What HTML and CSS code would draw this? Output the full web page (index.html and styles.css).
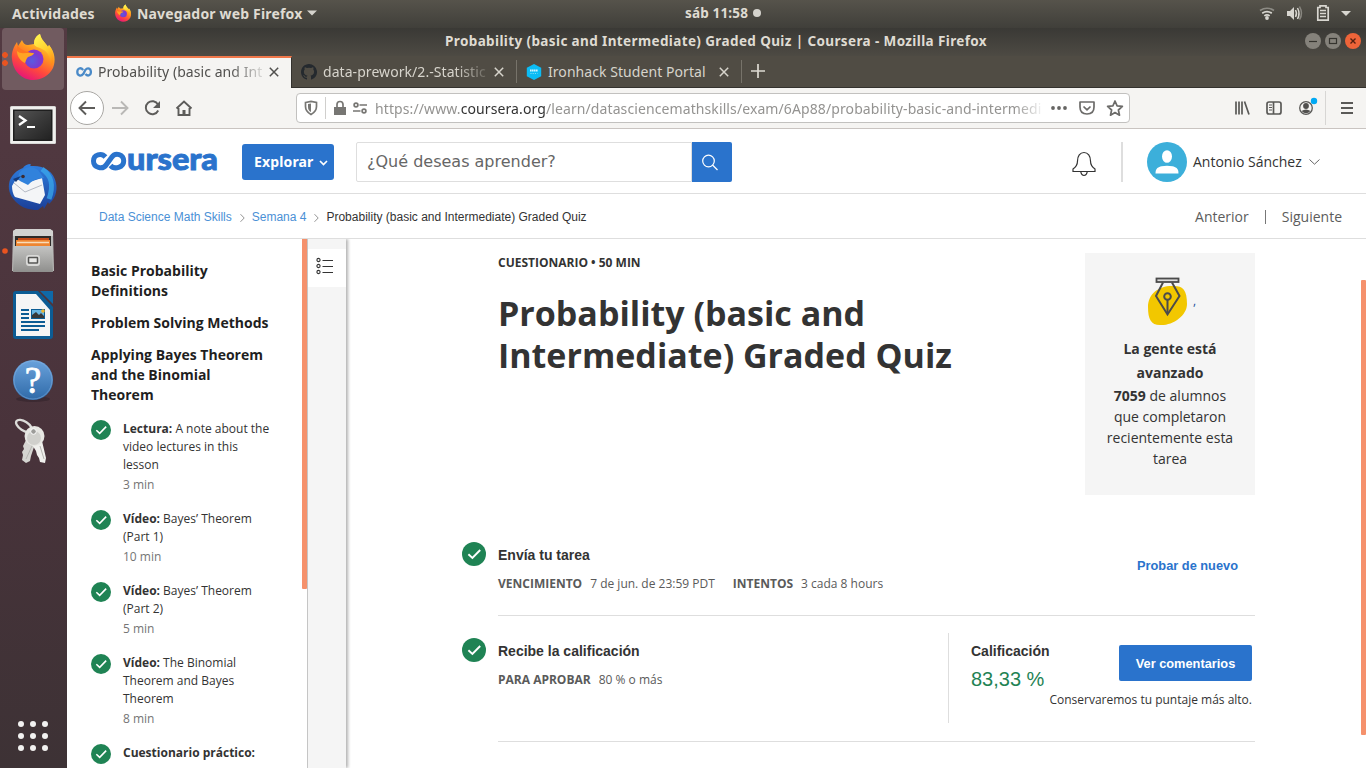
FILE: index.html
```
<!DOCTYPE html>
<html lang="es">
<head>
<meta charset="utf-8">
<title>Probability (basic and Intermediate) Graded Quiz | Coursera</title>
<link rel="stylesheet" href="styles.css">
</head>
<body>
<svg width="0" height="0" class="defs">
  <defs>
    <linearGradient id="fxBody" x1="0.8" y1="0" x2="0.3" y2="1"><stop offset="0" stop-color="#fff44f"/><stop offset=".4" stop-color="#ff9a1f"/><stop offset=".7" stop-color="#ff4a3c"/><stop offset="1" stop-color="#e5127c"/></linearGradient>
    <linearGradient id="fxFlame" x1="0.3" y1="0" x2="0.7" y2="1"><stop offset="0" stop-color="#fff44f"/><stop offset=".5" stop-color="#ffd02e"/><stop offset="1" stop-color="#ff8a16"/></linearGradient>
    <radialGradient id="fxGlobe" cx=".4" cy=".6" r=".7"><stop offset="0" stop-color="#5a5be0"/><stop offset=".6" stop-color="#7a3bd0"/><stop offset="1" stop-color="#9c2fc9"/></radialGradient>
    <linearGradient id="screen" x1="0" y1="0" x2="1" y2="1"><stop offset="0" stop-color="#555"/><stop offset=".5" stop-color="#3a3a3a"/><stop offset="1" stop-color="#222"/></linearGradient>
    <linearGradient id="bird" x1="0" y1="0" x2="0" y2="1"><stop offset="0" stop-color="#2f7fe0"/><stop offset="1" stop-color="#1b3f98"/></linearGradient>
    <linearGradient id="metal" x1="0" y1="0" x2="0" y2="1"><stop offset="0" stop-color="#c4c4c2"/><stop offset="1" stop-color="#8f8f8d"/></linearGradient>
    <linearGradient id="helpBg" x1="0" y1="0" x2="0" y2="1"><stop offset="0" stop-color="#6aa2dc"/><stop offset="1" stop-color="#2f6aa8"/></linearGradient>
    <symbol id="firefox" viewBox="0 0 46 48">
      <path d="M2 26C1 20 4 13 7 9l1 4 4-6c1 3 3 5 6 5l6-1C24 6 26 3 30 1c1 6 6 9 8 13l1-2c6 7 7 16 4 23-4 8-12 12-20 12C12 47 3 38 2 26z" fill="url(#fxBody)"/>
      <path d="M24 11C24 6 26 3 30 1c1 6 6 9 8 13l1-2c6 8 5 17 2 22 0-8-2-15-9-18-4-2-7-2-8-5z" fill="url(#fxFlame)"/>
      <circle cx="24" cy="26" r="9.5" fill="url(#fxGlobe)"/>
      <path d="M7 18c5-1 9 0 12 2h5c-1 3-4 3-6 4-2 2-2 4-3 6-4-2-8-6-8-12z" fill="#ffa423"/>
      <path d="M7 12c2 3 5 5 8 6l8 2c-7-1-12 2-16-2z" fill="#ff751f"/>
    </symbol>
    <symbol id="done" viewBox="0 0 24 24"><circle cx="12" cy="12" r="12" fill="#1f8354"/><path d="M6.400 12.300l4 3.700 7.800-8" fill="none" stroke="#fff" stroke-width="1.900"/></symbol>
    <symbol id="close" viewBox="0 0 10 10"><path d="M.8.8l8.400 8.400M9.200.8L.8 9.200" fill="none" stroke="currentColor" stroke-width="1.500"/></symbol>
  </defs>
</svg>
<div class="desktop">
  <div class="panel">
    <span class="panel-activities">Actividades</span>
    <svg class="panel-fx" width="18" height="18"><use href="#firefox"/></svg>
    <span class="panel-app">Navegador web Firefox</span>
    <svg width="12" height="6" viewBox="0 0 12 6"><path d="M1 .5h10L6 5.500z" fill="#d5d3cd"/></svg>
    <span class="panel-clock">sáb 11:58</span>
    <span class="panel-dot"></span>
    <svg class="panel-tray" width="106" height="28" viewBox="1255 0 106 28">
      <g fill="none" stroke="#d8d6d0" stroke-width="1.700"><path d="M1260 10.500q7-4.500 14 0" opacity=".45"/><path d="M1262.200 13.200q4.800-3.200 9.600 0M1264.300 15.900q2.700-1.900 5.400 0"/></g><circle cx="1267" cy="18" r="1.900" fill="#d8d6d0"/>
      <path d="M1287 11h3l4-4v13l-4-4h-3z" fill="#d8d6d0"/><path d="M1295.500 10q2 3.500 0 7M1297.500 8q3 5.500 0 11" fill="none" stroke="#d8d6d0" stroke-width="1.500"/><path d="M1299.500 6.500q4 7 0 13" fill="none" stroke="#88867f" stroke-width="1.500"/>
      <path d="M1317.800 20.200V7.500h2.200v-1.700h6v1.700h2.200v12.700z" fill="none" stroke="#d8d6d0" stroke-width="1.700"/><path d="M1320 10.500h6M1320 13.500h6M1320 16.500h6" stroke="#d8d6d0" stroke-width="1.500"/>
      <path d="M1341 11h10l-5 5z" fill="#d8d6d0"/>
    </svg>
  </div>
  <div class="below">
    <nav class="dock">
      <div class="dock-item active"><svg width="46" height="48"><use href="#firefox"/></svg></div>
      <svg width="67" height="64" viewBox="0 92 67 64"><rect x="10" y="106" width="46" height="38" rx="1.500" fill="#d9d9d7"/><rect x="11" y="107" width="44" height="36" fill="#f0f0ee"/><rect x="13" y="109.500" width="39.500" height="31.500" fill="#1e1e1e"/><rect x="14.500" y="111" width="36.500" height="28.500" fill="url(#screen)"/><path d="M19 116l6.500 4.500L19 125" fill="none" stroke="#fff" stroke-width="2.300"/><path d="M27 127h8" stroke="#fff" stroke-width="2"/></svg>
      <svg width="67" height="64" viewBox="0 156 67 64"><path d="M9 184c1-8 8-14 14-16 1-2 4-4 8-4-1 1-1 2 0 2 12-1 23 5 25 17 2 9-2 17-7 21l-1-2-4 7-1-3-5 4c-9 0-16-2-22-8-5-5-8-11-7-18z" fill="url(#bird)"/><path d="M12 186l4-7 10 4 16-5 3 17-5 9-25-7q-3-4-3-11z" fill="#f4f5f7"/><path d="M14 183l11 9 17-7" fill="none" stroke="#b5bac4"/><path d="M22 170q8-6 16 0l6 8q-10 0-16 7l-8-4q-4-6 2-11z" fill="#3182dc"/><path d="M42 169c10 7 12 16 7 30" fill="none" stroke="#3ba8eb" stroke-width="5" opacity=".75"/><circle cx="23" cy="176.500" r="1.800" fill="#3c2b30"/><path d="M13 179l8-3-5 6z" fill="#143a78"/></svg>
      <svg width="67" height="64" viewBox="0 220 67 64"><path d="M13 231l3-2h34l3 2 1 40H12z" fill="#b9b9b7"/><path d="M13 231l3-2h34l3 2v5H13z" fill="#d2d2d0"/><rect x="15" y="236" width="36" height="11" fill="#2d2a28"/><rect x="18" y="238" width="31" height="8" fill="#c44a17"/><rect x="16" y="240" width="34" height="7" fill="#ee8530"/><path d="M17 242.500h32" stroke="#f8dcb8" stroke-width="1.500"/><path d="M14 246h38l1 26H13z" fill="url(#metal)"/><rect x="27" y="256" width="12" height="9" rx="2" fill="#e6e6e4" stroke="#dadad8" stroke-width="2"/><rect x="28.500" y="257.500" width="9" height="5.500" rx=".5" fill="#e8e8e6" stroke="#565654" stroke-width="1.500"/><circle cx="5" cy="251" r="2.800" fill="#e95420"/></svg>
      <svg width="67" height="64" viewBox="0 284 67 64"><path d="M16 291h22l15 16v29q0 3-3 3H16q-3 0-3-3v-42q0-3 3-3z" fill="#0c5c94"/><path d="M16 294h20l14 16v26H16z" fill="#f5f5f5"/><path d="M40 291h13v13z" fill="#0f69a8"/><path d="M21 310h8M21 314h8M21 318h8M21 322h24M21 326h24M21 330h18" stroke="#0c5c94" stroke-width="1.900"/><rect x="31" y="309" width="14" height="10" fill="#0c5c94"/><rect x="32" y="310" width="12" height="8" fill="#68b5e2"/><path d="M32 318v-3l4-3 3 3 2-2 3 3v2z" fill="#383838"/><circle cx="43" cy="311" r="1.800" fill="#efb62f"/></svg>
      <svg width="67" height="64" viewBox="0 348 67 64"><ellipse cx="33" cy="399" rx="17" ry="3" fill="#2d2027" opacity=".5"/><circle cx="33" cy="380" r="20" fill="url(#helpBg)"/><circle cx="33" cy="380" r="19" fill="none" stroke="#8ab6e3" opacity=".5"/><text x="33" y="393" text-anchor="middle" class="dock-help">?</text></svg>
      <svg width="67" height="64" viewBox="0 412 67 64"><ellipse cx="24" cy="426" rx="9" ry="4.500" transform="rotate(33 24 426)" fill="none" stroke="#dcdcd9" stroke-width="2.300"/><path d="M26 440l-3 6 1 3-2 3 1 3-1 5 4 3 4-2 1-5 5-15z" fill="#d5d5d1"/><path d="M31 443l5 8 1 4 2 3 1 4 5 1 1-5-4-17z" fill="#f0f0ed"/><circle cx="34.500" cy="436" r="10" fill="#e7e7e3"/><circle cx="34" cy="438" r="7" fill="#d0d0cc"/><circle cx="33.500" cy="431.500" r="2.800" fill="#9c9c99" stroke="#fff"/><path d="M26 459l6-13M40 446l4 13" stroke="#b5b5b1"/></svg>
      <svg class="dock-apps" width="67" height="64" viewBox="0 704 67 64"><g fill="#f2f1f0"><circle cx="21" cy="724" r="3"/><circle cx="33" cy="724" r="3"/><circle cx="45" cy="724" r="3"/><circle cx="21" cy="736" r="3"/><circle cx="33" cy="736" r="3"/><circle cx="45" cy="736" r="3"/><circle cx="21" cy="748" r="3"/><circle cx="33" cy="748" r="3"/><circle cx="45" cy="748" r="3"/></g></svg>
    </nav>
    <div class="window">
      <div class="titlebar">
        <span class="title-text">Probability (basic and Intermediate) Graded Quiz | Coursera - Mozilla Firefox</span>
        <svg class="win-buttons" width="60" height="20" viewBox="1303 31 60 20"><circle cx="1313" cy="41" r="8" fill="#85827b"/><circle cx="1333" cy="41" r="8" fill="#85827b"/><circle cx="1353" cy="41" r="8" fill="#ee6439"/><g fill="none" stroke="#35342f" stroke-width="1.200"><path d="M1309 41.500h8"/><rect x="1329.500" y="38.500" width="7" height="5"/><path d="M1350.500 38.500l5 5M1355.500 38.500l-5 5" stroke="#542010" stroke-width="1.400"/></g></svg>
      </div>
      <div class="tabs">
        <div class="tab tab-active">
          <svg width="16" height="10" viewBox="0 0 16 10"><path d="M7.200 3C4.500-.2 1.300 1.500 1.300 5s3.500 5 6.100 1.800L9.300 3c2.600-3 5.600-1.300 5.600 2s-3 4.800-5.500 2" fill="none" stroke="#4a8ac8" stroke-width="2.300"/></svg>
          <span class="tab-label fade">Probability (basic and Int</span>
          <svg width="10" height="10"><use href="#close"/></svg>
        </div>
        <div class="tab tab-git">
          <svg width="16" height="16" viewBox="0 0 16 16"><path fill="#24292e" d="M8 0C3.600 0 0 3.600 0 8c0 3.500 2.300 6.500 5.500 7.600.4.100.5-.2.500-.4v-1.500c-2.200.5-2.700-.9-2.700-.9-.4-.9-.9-1.200-.9-1.200-.7-.5.100-.5.100-.5.800.1 1.200.8 1.200.8.700 1.300 1.900.9 2.300.7.100-.5.300-.9.500-1.100-1.800-.2-3.600-.9-3.600-4 0-.9.300-1.600.8-2.100-.1-.2-.4-1 .1-2.100 0 0 .7-.2 2.200.8a8 8 0 0 1 4 0c1.500-1 2.200-.8 2.200-.8.500 1.100.2 1.900.1 2.100.5.600.8 1.300.8 2.100 0 3.100-1.900 3.800-3.600 4 .3.200.5.700.5 1.500v2.200c0 .2.100.5.500.4A8 8 0 0 0 8 0z"/></svg>
          <span class="tab-label fade">data-prework/2.-Statistic</span>
          <svg width="10" height="10"><use href="#close"/></svg>
        </div>
        <div class="tab tab-iron">
          <svg width="16" height="16" viewBox="0 0 16 16"><path d="M8 0l7.200 3.800v8.400L8 16 .8 12.200V3.800z" fill="#0cbcf5"/><path d="M4 6.500h8" stroke="#d2f4ff" stroke-width="1.800" stroke-dasharray="1.600 .4"/><path d="M4.500 9.500h7" stroke="#8be1fb" stroke-dasharray="1 1.200"/></svg>
          <span class="tab-label">Ironhack Student Portal</span>
          <svg width="10" height="10"><use href="#close"/></svg>
        </div>
        <svg class="tab-new" width="14" height="14" viewBox="0 0 14 14"><path d="M7 0v14M0 7h14" stroke="#dddad2" stroke-width="1.700"/></svg>
      </div>
      <div class="toolbar">
        <svg width="230" height="40" viewBox="67 88 230 40">
          <circle cx="87" cy="108" r="16.500" fill="#fff" stroke="#a9a7a4"/>
          <g fill="none" stroke="#5d5c5a" stroke-width="1.900"><path d="M95 108H80M86 101.500l-6.500 6.500 6.500 6.500"/><path d="M112 108h15M121 101.500l6.500 6.500-6.500 6.500" stroke="#b9b8b6"/><path d="M158 104.500a6.500 6.500 0 1 0 .2 6"/><path d="M176.500 108.500l7.500-7 7.500 7M178.500 108v7h11v-7"/></g><path d="M160 101v7h-7zM182.500 110h3v5h-3z" fill="#5d5c5a"/>
        </svg>
        <div class="urlbar">
          <svg width="78" height="28" viewBox="297 94 78 28"><g fill="none" stroke="#777673" stroke-width="1.700"><path d="M305.500 102.500l5.500-1.200 5.500 1.200v4q0 5-5.500 8-5.500-3-5.500-8z"/><path d="M325.500 97v22" stroke="#d0cfcd" stroke-width="1"/><path d="M337 107v-2.500a3 3 0 0 1 6 0v2.500"/><circle cx="356" cy="105" r="1.900"/><circle cx="364" cy="111" r="1.900"/><path d="M359.500 105h7.500M353 111h7.500"/></g><path d="M311 103.500v8.500q-3-1.500-3-5v-3zM334 107h12v8h-12z" fill="#777673"/></svg>
          <span class="url">https://www.<b>coursera.org</b>/learn/datasciencemathskills/exam/6Ap88/probability-basic-and-intermedi</span>
          <svg width="87" height="28" viewBox="1042 94 87 28"><g fill="#666563"><circle cx="1053" cy="108" r="1.900"/><circle cx="1059" cy="108" r="1.900"/><circle cx="1065" cy="108" r="1.900"/></g><g fill="none" stroke="#6c6b69" stroke-width="1.700" stroke-linejoin="round"><path d="M1080 102h14v5q0 7-7 7t-7-7zM1083.500 106.500l3.500 3.300 3.500-3.300"/><path d="M1115 101l2.100 4.800 5.300.6-4 3.600 1.100 5.200-4.500-2.700-4.500 2.700 1.100-5.200-4-3.600 5.300-.6z"/></g></svg>
        </div>
        <svg class="tool-right" width="136" height="40" viewBox="1230 88 136 40"><g fill="none" stroke="#5a5957" stroke-width="1.700"><path d="M1236 101.500v13M1239 101.500v13M1242 101.500v13M1244.500 101.500l4.500 13"/><rect x="1267" y="102" width="14" height="12" rx="2"/><path d="M1273.500 102v12" /><path d="M1269 105h3M1269 107.500h3M1269 110h3" stroke-width="1"/><circle cx="1306" cy="108" r="6.300" stroke-width="1.300"/><path d="M1341 103h12M1341 108h12M1341 113h12" stroke-width="2"/></g><circle cx="1306" cy="106" r="2.900" fill="#51504e"/><path d="M1301.500 111q4.500-3 9 0-4.500 4.500-9 0z" fill="#51504e"/><circle cx="1314" cy="101" r="3.200" fill="#00a9f4"/><path d="M1325.500 91v34" stroke="#d7d6d4"/></svg>
      </div>
      <div class="page">
        <header class="site-header">
          <svg class="logo" width="130" height="40" viewBox="90 141 130 40"><path d="M105.500 157C101.500 152.500 93.500 154.500 93.500 161S102.500 170.500 106.500 164.500L111.500 157.500C115.500 151.500 123.700 154.500 123.700 161S114.500 170 110.500 165.500" fill="none" stroke="#2a73cc" stroke-width="5"/><text x="127" y="169.600" textLength="91" lengthAdjust="spacingAndGlyphs" class="logo-text">ursera</text></svg>
          <button class="explore">Explorar<svg width="9" height="6" viewBox="0 0 9 6"><path d="M1 1l3.500 3.500L8 1" fill="none" stroke="#fff" stroke-width="1.700"/></svg></button>
          <div class="search">¿Qué deseas aprender?</div>
          <div class="search-btn"><svg width="18" height="18" viewBox="0 0 18 18"><circle cx="7.500" cy="7" r="5.800" fill="none" stroke="#fff" stroke-width="1.200"/><path d="M11.500 11l5 5" stroke="#fff" stroke-width="1.300"/></svg></div>
          <svg class="bell" width="24" height="26" viewBox="0 0 24 26"><path d="M1 20.500h22v-2.500c-3-2-4.500-4-4.500-8 0-5-2.500-8.500-6.500-8.500S5.500 5 5.500 10c0 4-1.500 6-4.500 8zM8.800 21q.7 3.500 3.200 3.500t3.200-3.500" fill="none" stroke="#333" stroke-width="1.200"/></svg>
          <div class="header-rule"></div>
          <svg class="avatar" width="40" height="40" viewBox="0 0 40 40"><circle cx="20" cy="20" r="20" fill="#3cafda"/><ellipse cx="20" cy="14.500" rx="5" ry="6.300" fill="#fff"/><path d="M8.500 31.500c0-5.500 3-6.500 6-7.200q5.500-1 11 0c3 .7 6 1.700 6 7.200z" fill="#fff"/></svg>
          <span class="user">Antonio Sánchez</span>
          <svg width="11" height="6" viewBox="0 0 11 6"><path d="M.5.500l5 4.700 5-4.700" fill="none" stroke="#666" stroke-width="1"/></svg>
        </header>
        <div class="crumbs">
          <a>Data Science Math Skills</a><svg class="sep" width="5" height="8" viewBox="0 0 5 8"><path d="M.5.200L4.200 4 .5 7.800" fill="none" stroke="#888" stroke-width=".9"/></svg>
          <a>Semana 4</a><svg class="sep" width="5" height="8" viewBox="0 0 5 8"><path d="M.5.200L4.200 4 .5 7.800" fill="none" stroke="#888" stroke-width=".9"/></svg>
          <span>Probability (basic and Intermediate) Graded Quiz</span>
          <span class="prev">Anterior</span><i></i><span class="next">Siguiente</span>
        </div>
        <div class="content">
          <aside class="lessons">
            <div class="lessons-list">
              <h3>Basic Probability<br>Definitions</h3>
              <h3>Problem Solving Methods</h3>
              <h3>Applying Bayes Theorem<br>and the Binomial<br>Theorem</h3>
              <div class="lesson"><svg width="20" height="20"><use href="#done"/></svg><div><p><b>Lectura:</b> A note about the<br>video lectures in this<br>lesson</p><small>3 min</small></div></div>
              <div class="lesson"><svg width="20" height="20"><use href="#done"/></svg><div><p><b>Vídeo:</b> Bayes’ Theorem<br>(Part 1)</p><small>10 min</small></div></div>
              <div class="lesson"><svg width="20" height="20"><use href="#done"/></svg><div><p><b>Vídeo:</b> Bayes’ Theorem<br>(Part 2)</p><small>5 min</small></div></div>
              <div class="lesson"><svg width="20" height="20"><use href="#done"/></svg><div><p><b>Vídeo:</b> The Binomial<br>Theorem and Bayes<br>Theorem</p><small>8 min</small></div></div>
              <div class="lesson"><svg width="20" height="20"><use href="#done"/></svg><div><p><b>Cuestionario práctico:</b></p></div></div>
            </div>
            <div class="lessons-scroll"></div>
          </aside>
          <div class="strip"><div class="strip-btn"><svg width="18" height="18" viewBox="0 0 18 18"><g fill="none" stroke="#333" stroke-width="1.100"><circle cx="2.500" cy="3" r="1.600"/><circle cx="2.500" cy="9" r="1.600"/><circle cx="2.500" cy="15" r="1.600"/><path d="M6.500 3.500H17M6.500 9.500H17M6.500 15.500H17"/></g></svg></div></div>
          <main class="main">
            <section class="hero">
              <div>
                <div class="kicker">CUESTIONARIO • 50 MIN</div>
                <h1>Probability (basic and<br>Intermediate) Graded Quiz</h1>
              </div>
              <div class="card">
                <div class="card-icon"><svg width="41" height="50" viewBox="0 0 41 50"><path d="M1 31C1 17 13 9 27 10c9 0 13 4 13 18 0 12-15 22-27 21C4 49 1 43 1 31z" fill="#f2c700"/><g fill="none" stroke="#4b4b4b" stroke-width="2"><rect x="9.500" y="2.500" width="22" height="3.500" fill="#ddd" stroke-width="1.800"/><path d="M16 6.500L9 20l11.500 18.500L32.500 20 25 6.500"/><circle cx="20.500" cy="20.500" r="3.300"/><path d="M20.500 24v13"/></g></svg><span>,</span></div>
                <b class="card-title">La gente está<br>avanzado</b>
                <p><b>7059</b> de alumnos<br>que completaron<br>recientemente esta<br>tarea</p>
              </div>
            </section>
            <section class="step step-submit">
              <svg class="step-mark" width="24" height="24"><use href="#done"/></svg>
              <div class="step-info"><h2>Envía tu tarea</h2><div class="meta"><b>VENCIMIENTO</b><span>7 de jun. de 23:59 PDT</span><b>INTENTOS</b><span>3 cada 8 hours</span></div></div>
              <a class="retry">Probar de nuevo</a>
            </section>
            <section class="step step-grade">
              <svg class="step-mark" width="24" height="24"><use href="#done"/></svg>
              <div class="step-info"><h2>Recibe la calificación</h2><div class="meta"><b class="pass">PARA APROBAR</b><span>80 % o más</span></div></div>
              <div class="grade">
                <div class="grade-score"><h2>Calificación</h2><div class="score">83,33 %</div></div>
                <div class="grade-action"><button>Ver comentarios</button><p>Conservaremos tu puntaje más alto.</p></div>
              </div>
            </section>
          </main>
          <div class="page-scroll"></div>
        </div>
      </div>
    </div>
  </div>
</div>
</body>
</html>
```
FILE: styles.css
```
* { box-sizing: border-box; }
body { margin: 0; width: 1366px; height: 768px; overflow: hidden; font-family: "Noto Sans", sans-serif; color: #333; }
h1, h2, h3, p { margin: 0; }
svg { display: block; flex: none; }
button { border: 0; padding: 0; color: #fff; background: #2a73cc; }
.defs { position: absolute; }
.desktop { width: 1366px; height: 768px; display: flex; flex-direction: column; }

/* System panel */
.panel { height: 28px; flex: none; display: flex; align-items: center; background: linear-gradient(#56534b, #403f3a); color: #dfdbd2; font-weight: 700; font-size: 14px; letter-spacing: .17px; white-space: nowrap; padding: 0 0 2px 12px; }
.panel span { flex: none; }
.panel-activities { width: 102px; }
.panel-fx { margin-right: 5px; }
.panel-app { width: 169px; }
.panel-clock { width: 68px; margin-left: 367px; font-size: 13.500px; }
.panel-dot { width: 8px; height: 8px; border-radius: 4px; background: #d5d3cd; }
.panel-tray { margin: 2px 5px 0 auto; }
.below { display: flex; flex: 1; min-height: 0; }

/* Dock */
.dock { width: 67px; flex: none; display: flex; flex-direction: column; background: linear-gradient(#533a42, #49333b 55%, #3d3235); }
.dock-item { height: 62px; width: 62px; margin: 0 0 2px 2px; border-radius: 4px; flex: none; display: flex; align-items: center; padding-left: 8px; background: radial-gradient(circle at 3px 27px, #e95420 2.500px, transparent 3.200px), radial-gradient(circle at 3px 35px, #e95420 2.500px, transparent 3.200px), #715b60; }
.dock-item svg { margin-top: -4px; }
.dock-apps { margin-top: auto; }
.dock-help { font: 37px "Liberation Serif", serif; fill: #fff; stroke: #fff; stroke-width: .8px; }

/* Browser window */
.window { flex: 1; min-width: 0; display: flex; flex-direction: column; }
.titlebar { height: 28px; flex: none; display: flex; align-items: center; background: linear-gradient(#3a3935, #4d4a43); color: #dfdbd2; font-weight: 700; font-size: 13.500px; letter-spacing: .38px; padding: 0 3px 2px 378px; white-space: nowrap; }
.win-buttons { margin-left: auto; }
.tabs { height: 32px; flex: none; display: flex; background: #504c44; border-bottom: 1px solid #34322e; color: #d7d4cc; }
.tab { display: flex; align-items: center; flex: none; font-size: 14px; }
.tab-active { width: 225px; height: 32px; padding: 0 0 2px 9px; background: #f5f4f2; color: #51504e; border-top: 2px solid #f0774a; border-right: 1px solid #34322e; }
.tab-active .tab-label { margin-top: -2px; }
.tab-git { width: 224px; padding-left: 9px; }
.tab-iron { width: 226px; border-left: 1px solid #77736a; border-right: 1px solid #77736a; margin: 4px 0; padding-left: 9px; }
.tab-label { white-space: nowrap; margin: 0 6px; width: 165px; flex: none; letter-spacing: .06px; }
.fade { -webkit-mask-image: linear-gradient(90deg, #000 80%, rgba(0,0,0,.15) 100%); mask-image: linear-gradient(90deg, #000 80%, rgba(0,0,0,.15) 100%); }
.tab-new { margin: 8px 0 0 9px; }
.toolbar { height: 41px; flex: none; display: flex; background: #f5f4f2; border-bottom: 1px solid #c9c4c1; }
.urlbar { width: 834px; height: 30px; margin: 5px 0 0 -1px; border: 1px solid #c2c1bf; border-radius: 4px; background: #fff; display: flex; align-items: center; flex: none; }
.url { width: 667px; flex: none; white-space: nowrap; font-size: 14px; letter-spacing: .1px; color: #949391; -webkit-mask-image: linear-gradient(90deg, #000 96%, rgba(0,0,0,.1) 100%); mask-image: linear-gradient(90deg, #000 96%, rgba(0,0,0,.1) 100%); }
.url b { font-weight: 400; color: #333; }
.tool-right { margin-left: auto; }

/* Site header */
.page { flex: 1; min-height: 0; display: flex; flex-direction: column; background: #fff; font-family: "Open Sans", sans-serif; }
.site-header { height: 65px; flex: none; border-bottom: 1px solid #dedede; display: flex; align-items: center; padding: 2px 46px 0 23px; }
.site-header > * { flex: none; }
.logo { margin: 0 22px 2px 0; }
.logo-text { font: 900 31px Lato, sans-serif; fill: #2a73cc; stroke: #2a73cc; stroke-width: .9px; }
.explore { width: 92px; height: 36px; border-radius: 3px; font: 700 14px "Noto Sans", sans-serif; letter-spacing: .15px; display: flex; align-items: center; padding: 0 0 1px 12px; gap: 5px; }
.explore svg { margin-top: 2px; }
.search { width: 336px; height: 40px; margin-left: 22px; border: 1px solid #dedede; border-radius: 2px 0 0 2px; padding-left: 10px; font: 16px/37px "DejaVu Sans", sans-serif; color: #666; }
.search-btn { width: 40px; height: 40px; background: #2a73cc; border-radius: 0 2px 2px 0; padding: 12px 0 0 9px; }
.bell { margin-left: auto; margin-top: 3px; }
.header-rule { width: 2px; height: 40px; background: #dedede; margin: 0 24px 0 25px; }
.user { width: 116px; margin: -1px 0 0 6px; font-size: 14px; white-space: nowrap; }
.crumbs { height: 45px; flex: none; border-bottom: 1px solid #dedede; display: flex; align-items: center; padding: 1px 24px 0 32px; font: 12px "Liberation Sans", sans-serif; white-space: nowrap; }
.crumbs a { color: #4a90d6; }
.crumbs .sep { margin: 2px 7px 0 8px; }
.crumbs .prev { margin-left: auto; }
.crumbs .prev, .crumbs .next { font: 14px "Open Sans", sans-serif; color: #5c5c5c; }
.crumbs i { width: 1px; height: 14px; background: #777; margin: 0 16px; }
.content { flex: 1; min-height: 0; display: flex; overflow: hidden; }

/* Lesson list */
.lessons { width: 241px; flex: none; display: flex; border-right: 1px solid #c9c9c9; }
.lessons-list { width: 235px; flex: none; padding: 22px 0 0 24px; }
.lessons h3 { font-size: 14px; line-height: 20px; margin-bottom: 12px; color: #1f1f1f; white-space: nowrap; }
.lessons h3 + .lesson { margin-top: 15px; }
.lesson { display: flex; gap: 12px; margin-bottom: 16px; font-size: 12px; line-height: 18px; white-space: nowrap; }
.lesson p { margin-bottom: 2px; }
.lesson small { display: block; font-size: 12px; line-height: 18px; color: #757575; }
.lessons-scroll { width: 5px; height: 350px; background: #f5916c; border-radius: 0 0 1px 1px; }
.strip { width: 38px; flex: none; background: #f5f5f5; padding-top: 10px; box-shadow: 2px 0 3px rgba(0,0,0,.3); }
.strip-btn { height: 38px; background: #fff; padding: 8px 0 0 8px; }

/* Main column */
.main { width: 909px; flex: none; padding: 14px 0 0 117px; }
.hero { display: flex; justify-content: space-between; width: 792px; padding-left: 35px; height: 242px; }
.kicker { font-size: 12px; font-weight: 700; line-height: 18px; padding-top: 1px; }
.hero h1 { font-size: 34px; line-height: 42px; margin-top: 20px; white-space: nowrap; }
.card { width: 170px; height: 242px; background: #f5f5f5; text-align: center; font-size: 14px; line-height: 21px; }
.card-icon { height: 84px; padding: 23px 0 0 62px; display: flex; font-size: 12px; }
.card-icon span { margin: 14px 0 0 5px; color: #1f4f9a; }
.card-title { line-height: 24px; display: block; }
.step { width: 757px; margin-left: 35px; border-bottom: 1px solid #dedede; display: flex; }
.step-mark { margin: 0 12px 0 -36px; }
.step-submit { height: 91px; margin-top: 30px; padding-top: 17px; }
.step-grade { height: 126px; padding-top: 22px; }
.step-info { width: 450px; padding-top: 3px; }
.step h2 { font: 700 14px/20px "Liberation Sans", sans-serif; white-space: nowrap; }
.meta { display: flex; font-size: 12px; line-height: 18px; margin-top: 10px; color: #5a5a5a; white-space: nowrap; }
.meta span { margin: 0 18px 0 8px; }
.retry { margin: 16px 17px 0 auto; font: 700 12.800px/15px "Liberation Sans", sans-serif; color: #2a73cc; white-space: nowrap; }
.grade { width: 307px; height: 90px; margin-top: -5px; border-left: 1px solid #dedede; display: flex; padding-left: 22px; }
.grade-score { width: 78px; flex: none; padding-top: 8px; }
.score { font: 20px/24px "Liberation Sans", sans-serif; color: #1f8354; margin-top: 6px; white-space: nowrap; }
.grade-action { width: 203px; flex: none; padding-top: 12px; display: flex; flex-direction: column; align-items: flex-end; }
.grade button { width: 133px; height: 36px; border-radius: 2px; font: 700 12.800px "Liberation Sans", sans-serif; }
.grade p { font-size: 12px; line-height: 18px; margin-top: 10px; white-space: nowrap; }
.page-scroll { width: 5px; height: 455px; margin: 41px 0 0 auto; background: #f5916c; flex: none; border-radius: 1px; }
```
